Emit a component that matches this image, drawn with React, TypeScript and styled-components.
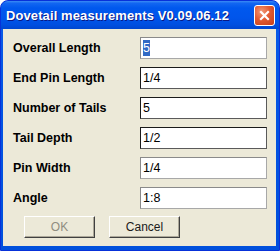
import React from "react";
import styled, { createGlobalStyle } from "styled-components";

const Global = createGlobalStyle`
  html, body { margin: 0; padding: 0; background: #ffffff; }
  body { width: 280px; height: 251px; overflow: hidden; }
`;

const Window = styled.div`
  width: 280px;
  height: 251px;
  box-sizing: border-box;
  display: flex;
  flex-direction: column;
  border-radius: 8px 8px 0 0;
  background: linear-gradient(180deg, #0a5ce8 0%, #0454e3 40%, #0050dc 100%);
  border: 1px solid #0831d9;
  padding: 0 3px 4px 2px;
  overflow: hidden;
`;

const TitleBar = styled.div`
  height: 28px;
  flex: none;
  display: flex;
  align-items: center;
  justify-content: space-between;
  margin: 0 -3px 0 -2px;
  padding: 0 4px 0 5px;
  border-radius: 7px 7px 0 0;
  background: linear-gradient(
    180deg,
    #3b8cf5 0%,
    #1266f1 8%,
    #0058ee 25%,
    #0055eb 60%,
    #004fe0 85%,
    #0046cf 100%
  );
`;

const Title = styled.span`
  font-family: "Liberation Sans", Arial, sans-serif;
  font-weight: bold;
  font-size: 13px;
  color: #ffffff;
  text-shadow: 1px 1px 0 #0a1883;
  letter-spacing: 0.1px;
`;

const CloseButton = styled.div`
  width: 21px;
  height: 21px;
  box-sizing: border-box;
  border: 1px solid #ffffff;
  border-radius: 3px;
  background: radial-gradient(circle at 35% 30%, #f29a78 0%, #e25b33 45%, #c63d18 100%);
  display: flex;
  align-items: center;
  justify-content: center;
`;

const Body = styled.div`
  flex: 1;
  background: #ece9d8;
  display: flex;
  flex-direction: column;
  padding: 8px 0 0 10px;
`;

const Form = styled.div`
  display: grid;
  grid-template-columns: 127px 127px;
  grid-auto-rows: 22px;
  row-gap: 8px;
  align-items: center;
`;

const Label = styled.label`
  font-family: "Liberation Sans", Arial, sans-serif;
  font-weight: bold;
  font-size: 12.5px;
  color: #000000;
`;

const Field = styled.div<{ $dark?: boolean }>`
  height: 22px;
  box-sizing: border-box;
  background: #ffffff;
  border: 1px solid ${(p) => (p.$dark ? "#1a1a1a" : "#8a8a8a")};
  border-right-color: ${(p) => (p.$dark ? "#5a5a5a" : "#a8a8a8")};
  border-bottom-color: ${(p) => (p.$dark ? "#5a5a5a" : "#a8a8a8")};
  display: flex;
  align-items: center;
  padding-left: 2px;
  font-family: "Liberation Sans", Arial, sans-serif;
  font-size: 12.5px;
  color: #000000;
`;

const Selected = styled.span`
  background: #316ac5;
  color: #ffffff;
  padding: 1px 0;
`;

const Buttons = styled.div`
  display: flex;
  gap: 14px;
  margin-top: 7px;
  padding-left: 11px;
`;

const Button = styled.div<{ $disabled?: boolean }>`
  width: 71px;
  height: 22px;
  box-sizing: border-box;
  background: #ece9d8;
  border: 1px solid #ffffff;
  border-right-color: #404040;
  border-bottom-color: #404040;
  box-shadow: inset -1px -1px 0 #aca899;
  display: flex;
  align-items: center;
  justify-content: center;
  font-family: "Liberation Sans", Arial, sans-serif;
  font-size: 12px;
  color: ${(p) => (p.$disabled ? "#8f8d80" : "#1a1a1a")};
`;

const rows: { label: string; value: string; dark?: boolean; selected?: boolean }[] = [
  { label: "Overall Length", value: "5", selected: true },
  { label: "End Pin Length", value: "1/4", dark: true },
  { label: "Number of Tails", value: "5", dark: true },
  { label: "Tail Depth", value: "1/2", dark: true },
  { label: "Pin Width", value: "1/4" },
  { label: "Angle", value: "1:8" },
];

export default function App() {
  return (
    <>
      <Global />
      <Window>
        <TitleBar>
          <Title>Dovetail measurements V0.09.06.12</Title>
          <CloseButton>
            <svg width="13" height="13" viewBox="0 0 13 13">
              <path d="M3 3 L10 10 M10 3 L3 10" stroke="#ffffff" strokeWidth="2.2" strokeLinecap="square" />
            </svg>
          </CloseButton>
        </TitleBar>
        <Body>
          <Form>
            {rows.map((r) => (
              <React.Fragment key={r.label}>
                <Label>{r.label}</Label>
                <Field $dark={r.dark}>
                  {r.selected ? <Selected>{r.value}</Selected> : r.value}
                </Field>
              </React.Fragment>
            ))}
          </Form>
          <Buttons>
            <Button $disabled>OK</Button>
            <Button>Cancel</Button>
          </Buttons>
        </Body>
      </Window>
    </>
  );
}
